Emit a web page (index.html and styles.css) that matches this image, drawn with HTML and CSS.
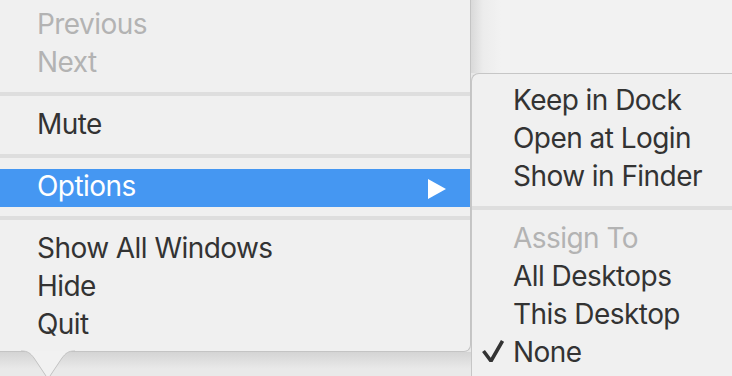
FILE: index.html
```html
<!DOCTYPE html>
<html lang="en">
<head>
    <meta charset="UTF-8">
    <title>Dock Menu</title>
    <link rel="stylesheet" href="styles.css">
</head>
<body>
    <div class="screen">
        <div class="main-col">
            <div class="menu main-menu">
                <div class="item disabled">Previous</div>
                <div class="item disabled">Next</div>
                <div class="separator"></div>
                <div class="item">Mute</div>
                <div class="separator"></div>
                <div class="item selected">
                    <span>Options</span>
                    <svg class="arrow" width="18" height="20" viewBox="0 0 18 20"><path d="M0 0 L18 10 L0 20 Z" fill="#fff"/></svg>
                </div>
                <div class="separator"></div>
                <div class="item">Show All Windows</div>
                <div class="item">Hide</div>
                <div class="item">Quit</div>
            </div>
            <div class="below">
                <!-- pointer under the menu -->
                <svg class="tail" width="54" height="30" viewBox="0 0 54 30">
                    <path d="M0 1 C7 1 9 3 13 8 L27 29 L41 8 C45 3 47 1 54 1 Z" fill="#f1f1f1"/>
                    <path d="M0 1 C7 1 9 3 13 8 L27 29 L41 8 C45 3 47 1 54 1" fill="none" stroke="#c2c2c2" stroke-width="1"/>
                </svg>
            </div>
        </div>
        <div class="side-col">
            <div class="backdrop"></div>
            <div class="menu submenu">
                <div class="item">Keep in Dock</div>
                <div class="item">Open at Login</div>
                <div class="item">Show in Finder</div>
                <div class="separator"></div>
                <div class="item disabled">Assign To</div>
                <div class="item">All Desktops</div>
                <div class="item">This Desktop</div>
                <div class="item checked">
                    <svg class="check" width="22" height="22" viewBox="0 0 22 22"><path d="M1.5 11 L9 21 L20.5 1" fill="none" stroke="#333" stroke-width="3.6" stroke-linejoin="miter"/></svg>
                    None
                </div>
            </div>
        </div>
    </div>
</body>
</html>
```

FILE: styles.css
```css
body {
    margin: 0;
    padding: 0;
    font-family: 'Inter', 'Liberation Sans', sans-serif;
    background-color: #e8e8e8;
}

.screen {
    width: 732px;
    height: 376px;
    overflow: hidden;
    display: flex;
}

.main-col {
    width: 471px;
    display: flex;
    flex-direction: column;
    flex-shrink: 0;
}

.menu {
    background-color: #f0f0f0;
    box-sizing: border-box;
}

.main-menu {
    height: 352px;
    padding: 7px 0 6px 0;
    border-right: 1px solid #c4c4c4;
    border-bottom: 1px solid #c4c4c4;
    border-bottom-right-radius: 7px;
}

.item {
    position: relative;
    height: 38px;
    line-height: 34px;
    padding-left: 37px;
    font-size: 28px;
    letter-spacing: -0.55px;
    color: #333;
    box-sizing: border-box;
    white-space: nowrap;
}

.item.disabled {
    color: #b3b3b3;
}

.item.selected {
    background-color: #4597f2;
    color: #fff;
    display: flex;
    align-items: center;
    justify-content: space-between;
    padding-right: 24px;
}

.item.selected span {
    line-height: 34px;
    align-self: flex-start;
}

.arrow {
    margin-top: 1px;
}

.separator {
    height: 24px;
    box-sizing: border-box;
    padding-top: 9px;
}

.separator::before {
    content: "";
    display: block;
    height: 4px;
    background-color: #dedede;
}

.below {
    position: relative;
    flex: 1;
    background: linear-gradient(#d4d4d4, #e9e9e9 70%);
}

.tail {
    position: absolute;
    left: 21px;
    top: -2px;
}

.side-col {
    flex: 1;
    display: flex;
    flex-direction: column;
}

.backdrop {
    height: 73px;
    background: linear-gradient(to right, #d9d9d9, #ececec 12px, #f2f2f2 30px);
}

.submenu {
    flex: 1;
    padding-top: 9px;
    border-top: 1px solid #c6c6c6;
    border-left: 1px solid #c6c6c6;
    border-top-left-radius: 8px;
}

.submenu .item {
    padding-left: 41px;
}

.check {
    position: absolute;
    left: 10px;
    top: 5px;
}
```
